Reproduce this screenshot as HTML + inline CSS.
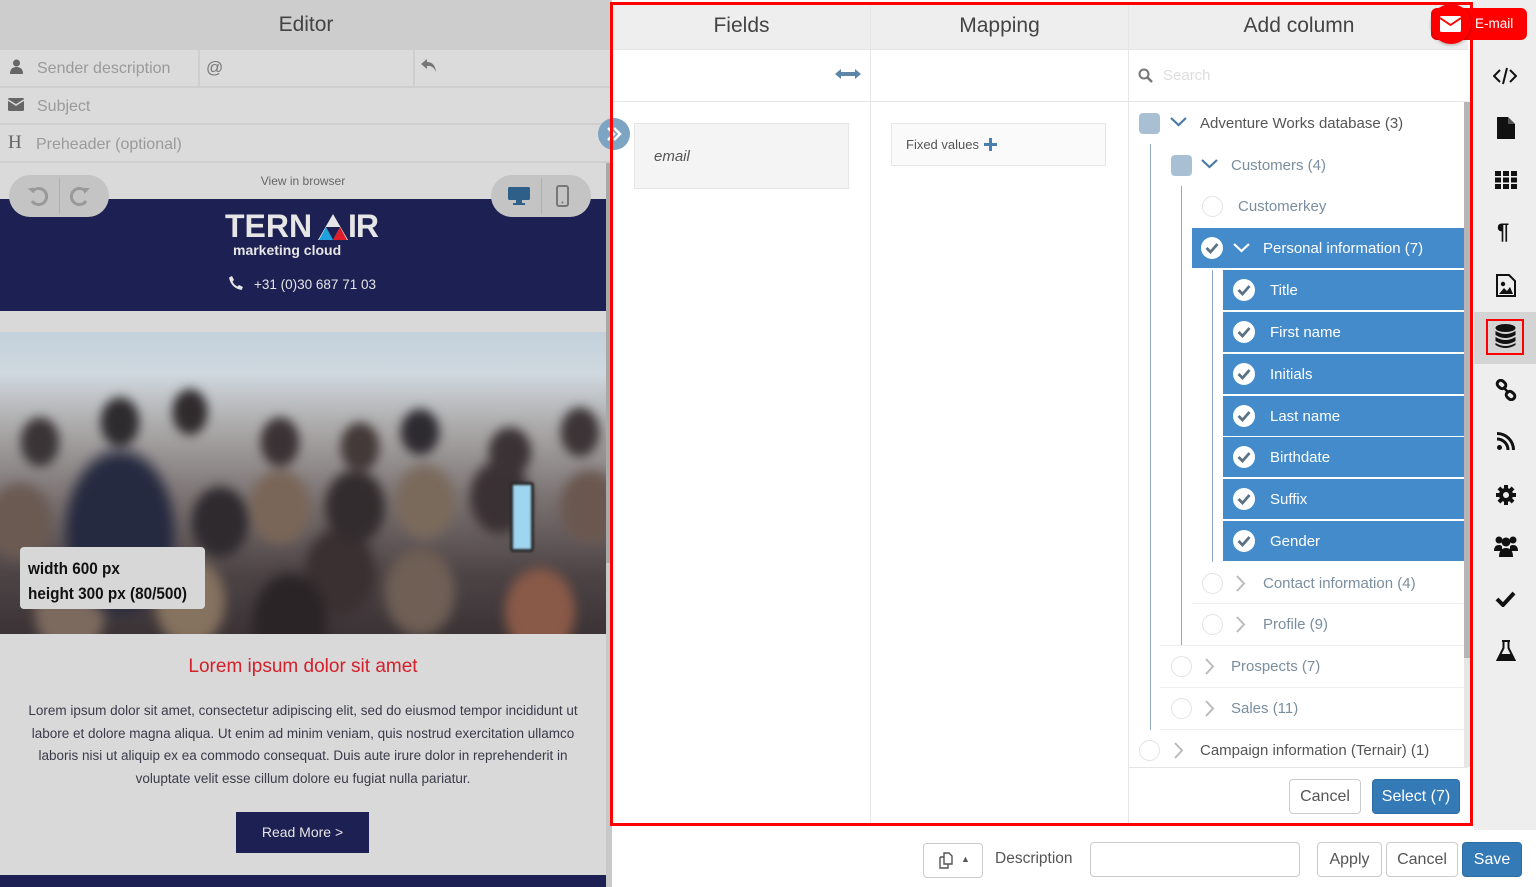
<!DOCTYPE html>
<html><head><meta charset="utf-8">
<style>
*{box-sizing:border-box;margin:0;padding:0}
body{width:1536px;height:887px;overflow:hidden;position:relative;background:#fff;font-family:"Liberation Sans",sans-serif}
.a{position:absolute}
.lbl{color:#9a9a9a;font-size:16px}
.sel{background:#438bcb;color:#fff}
.ck{position:absolute;width:22px;height:22px;border-radius:50%;background:#fff}
.ck svg{position:absolute;left:4px;top:5px}
.circ{position:absolute;width:21px;height:21px;border-radius:50%;border:1px solid #e3e3e3;background:#fff}
.sq{position:absolute;width:21px;height:21px;border-radius:4px;background:#a9bfd3}
.sep{position:absolute;height:1px;background:#eee}
.btn{position:absolute;border:1px solid #ccc;border-radius:4px;background:#fff;color:#555;font-size:16px;display:flex;align-items:center;justify-content:center}
.ico{position:absolute;left:1493px}
.t{position:absolute;font-size:15px}
</style></head><body>

<!-- LEFT EDITOR -->
<div class="a" style="left:0;top:0;width:612px;height:887px;background:#d9d9d9"></div>
<div class="a" style="left:0;top:0;width:612px;height:50px;background:#cdcdcd;font-size:21px;color:#444;text-align:center;line-height:50px">Editor</div>
<div class="a" style="left:0;top:50px;width:612px;height:38px;background:#dbdbdb;border-bottom:2px solid #cfcfcf"></div>
<div class="a" style="left:198px;top:50px;width:2px;height:38px;background:#cfcfcf"></div>
<div class="a" style="left:413px;top:50px;width:2px;height:38px;background:#cfcfcf"></div>
<svg class="a" style="left:10px;top:59px" width="13" height="15" viewBox="0 0 13 15"><circle cx="6.5" cy="4" r="3.5" fill="#666"/><path d="M0 15 Q0 8 6.5 8 Q13 8 13 15Z" fill="#666"/></svg>
<div class="a lbl" style="left:37px;top:60px">Sender description</div>
<div class="a" style="left:206px;top:58px;font-size:17px;color:#777">@</div>
<svg class="a" style="left:421px;top:59px" width="16" height="14" viewBox="0 0 16 14"><path d="M6 0 L0 5 L6 10 V7 Q12 6 15 13 Q14 3 6 3Z" fill="#777"/></svg>
<div class="a" style="left:0;top:88px;width:612px;height:37px;background:#dbdbdb;border-bottom:2px solid #cfcfcf"></div>
<svg class="a" style="left:8px;top:98px" width="16" height="13" viewBox="0 0 16 13"><rect width="16" height="13" rx="1.5" fill="#666"/><path d="M0 2 L8 7 L16 2" stroke="#dbdbdb" stroke-width="1.5" fill="none"/></svg>
<div class="a lbl" style="left:37px;top:98px">Subject</div>
<div class="a" style="left:0;top:125px;width:612px;height:38px;background:#dbdbdb;border-bottom:2px solid #cfcfcf"></div>
<div class="a" style="left:8px;top:132px;font-family:'Liberation Serif',serif;font-size:19px;color:#666">H</div>
<div class="a lbl" style="left:36px;top:136px">Preheader (optional)</div>
<div class="a" style="left:0;top:163px;width:606px;height:36px;background:#dadada;font-size:12px;color:#666;text-align:center;line-height:36px">View in browser</div>
<div class="a" style="left:0;top:199px;width:606px;height:112px;background:#1d2052"></div>
<div class="a" style="left:9px;top:175px;width:100px;height:42px;border-radius:21px;background:#c4c4c4"></div>
<div class="a" style="left:59px;top:178px;width:1px;height:36px;background:#b0b0b0"></div>
<svg class="a" style="left:27px;top:185px" width="22" height="22" viewBox="0 0 22 22"><path d="M5 7 A8 8 0 1 1 5 16" stroke="#999" stroke-width="3" fill="none"/><path d="M1 3 L7 3 L7 9Z" fill="#999" transform="rotate(-10 4 6)"/></svg>
<svg class="a" style="left:69px;top:185px" width="22" height="22" viewBox="0 0 22 22"><path d="M17 7 A8 8 0 1 0 17 16" stroke="#999" stroke-width="3" fill="none"/><path d="M21 3 L15 3 L15 9Z" fill="#999"/></svg>
<div class="a" style="left:491px;top:175px;width:100px;height:42px;border-radius:21px;background:#c4c4c4"></div>
<div class="a" style="left:541px;top:178px;width:1px;height:36px;background:#b0b0b0"></div>
<svg class="a" style="left:507px;top:186px" width="24" height="20" viewBox="0 0 24 20"><rect x="1" y="1" width="22" height="13" rx="1.5" fill="#2e5f88"/><rect x="9" y="14" width="6" height="3" fill="#2e5f88"/><rect x="6" y="17" width="12" height="2" fill="#2e5f88"/></svg>
<svg class="a" style="left:556px;top:185px" width="13" height="22" viewBox="0 0 13 22"><rect x="1" y="1" width="11" height="20" rx="2" fill="none" stroke="#777" stroke-width="2"/><circle cx="6.5" cy="17.5" r="1" fill="#777"/></svg>
<div class="a" style="left:225px;top:208px;font-size:32px;font-weight:bold;color:#e6e6e6">TERN</div>
<div class="a" style="left:348px;top:208px;font-size:32px;font-weight:bold;color:#e6e6e6;letter-spacing:-1px">IR</div>
<svg class="a" style="left:318px;top:214px" width="30" height="26" viewBox="0 0 30 26"><path d="M15 0 L30 26 H0Z" fill="#e6e6e6"/><path d="M8 13 L15 26 H1Z" fill="#1ea0dd"/><path d="M22 13 L29 26 H15Z" fill="#e01e2b"/><path d="M15 26 L8 13 H22Z" fill="#1d2052"/></svg>
<div class="a" style="left:233px;top:242px;font-size:14px;font-weight:bold;color:#e6e6e6">marketing cloud</div>
<svg class="a" style="left:229px;top:276px" width="14" height="14" viewBox="0 0 14 14"><path d="M3 0 L5 4 L3.5 5.5 Q5 9 8.5 10.5 L10 9 L14 11 L12.5 14 Q2 12 0 1.5Z" fill="#e6e6e6"/></svg>
<div class="a" style="left:254px;top:277px;font-size:13.5px;color:#e6e6e6">+31 (0)30 687 71 03</div>
<div class="a" style="left:0;top:311px;width:606px;height:21px;background:#d9d9d9"></div>
<!-- crowd image -->
<div class="a" style="left:0;top:332px;width:606px;height:302px;overflow:hidden;background:linear-gradient(180deg,#c3d1dc 0%,#cfd8de 14%,#aaa8a8 32%,#7b7272 55%,#4d4446 80%,#3b3336 100%)">
<div class="a" style="left:-20px;top:0;width:646px;height:330px;filter:blur(5px);background:
radial-gradient(ellipse 22px 28px at 60px 110px,#3a3436 75%,transparent 100%),
radial-gradient(ellipse 22px 28px at 140px 90px,#2e2b2e 75%,transparent 100%),
radial-gradient(ellipse 20px 26px at 210px 80px,#2f2a2c 75%,transparent 100%),
radial-gradient(ellipse 22px 28px at 300px 110px,#3a3234 75%,transparent 100%),
radial-gradient(ellipse 22px 28px at 380px 115px,#433938 75%,transparent 100%),
radial-gradient(ellipse 22px 26px at 440px 100px,#2e2b30 75%,transparent 100%),
radial-gradient(ellipse 24px 28px at 530px 120px,#3a3234 75%,transparent 100%),
radial-gradient(ellipse 22px 28px at 600px 100px,#3c3436 75%,transparent 100%),
radial-gradient(ellipse 60px 90px at 140px 200px,#262a40 80%,transparent 100%),
radial-gradient(ellipse 36px 44px at 40px 190px,#6a5a52 75%,transparent 100%),
radial-gradient(ellipse 32px 40px at 240px 190px,#2e2a2e 75%,transparent 100%),
radial-gradient(ellipse 34px 42px at 300px 175px,#7a6658 75%,transparent 100%),
radial-gradient(ellipse 34px 42px at 375px 175px,#332c2e 75%,transparent 100%),
radial-gradient(ellipse 34px 42px at 445px 170px,#7a6a5c 75%,transparent 100%),
radial-gradient(ellipse 34px 42px at 520px 165px,#3a3134 75%,transparent 100%),
radial-gradient(ellipse 34px 42px at 610px 175px,#6a5850 75%,transparent 100%),
radial-gradient(ellipse 40px 50px at 90px 280px,#7c6a5e 75%,transparent 100%),
radial-gradient(ellipse 40px 50px at 210px 270px,#85725f 75%,transparent 100%),
radial-gradient(ellipse 42px 55px at 310px 290px,#2a2426 75%,transparent 100%),
radial-gradient(ellipse 40px 50px at 360px 240px,#3a3032 75%,transparent 100%),
radial-gradient(ellipse 40px 50px at 440px 260px,#6f5f55 75%,transparent 100%),
radial-gradient(ellipse 40px 50px at 560px 280px,#8a5a48 75%,transparent 100%);"></div>
<div class="a" style="left:510px;top:150px;width:24px;height:70px;background:#9fd6ef;border:3px solid #2a2a2a;border-radius:3px;filter:blur(1px)"></div>
</div>
<div class="a" style="left:20px;top:547px;width:185px;height:62px;background:#d7d7d7;border-radius:4px"></div>
<div class="a" style="left:28px;top:556px;font-size:17px;font-weight:bold;color:#111;line-height:25px;transform:scaleX(.9);transform-origin:left">width 600 px<br>height 300 px (80/500)</div>
<div class="a" style="left:0;top:656px;width:606px;text-align:center;font-size:19px;color:#d3202a">Lorem ipsum dolor sit amet</div>
<div class="a" style="left:18px;top:700px;width:570px;text-align:center;font-size:13.5px;color:#3a3a4a;line-height:22.5px">Lorem ipsum dolor sit amet, consectetur adipiscing elit, sed do eiusmod tempor incididunt ut labore et dolore magna aliqua. Ut enim ad minim veniam, quis nostrud exercitation ullamco laboris nisi ut aliquip ex ea commodo consequat. Duis aute irure dolor in reprehenderit in voluptate velit esse cillum dolore eu fugiat nulla pariatur.</div>
<div class="a" style="left:236px;top:812px;width:133px;height:41px;background:#1d2052;color:#e6e6e6;font-size:14px;text-align:center;line-height:41px">Read More &gt;</div>
<div class="a" style="left:0;top:875px;width:606px;height:12px;background:#1d2052"></div>
<div class="a" style="left:606px;top:163px;width:6px;height:724px;background:#c8c8c8"></div>
<div class="a" style="left:606px;top:163px;width:6px;height:400px;background:#a9a9a9"></div>

<!-- MIDDLE PANEL -->
<div class="a" style="left:612px;top:0;width:860px;height:830px;background:#fff"></div>
<div class="a" style="left:612px;top:3px;width:856px;height:46px;background:#eee"></div>
<div class="a" style="left:613px;top:3px;width:257px;height:46px;font-size:21px;color:#444;text-align:center;line-height:46px">Fields</div>
<div class="a" style="left:871px;top:3px;width:257px;height:46px;font-size:21px;color:#444;text-align:center;line-height:46px">Mapping</div>
<div class="a" style="left:1129px;top:3px;width:340px;height:46px;font-size:21px;color:#444;text-align:center;line-height:46px">Add column</div>
<div class="a" style="left:870px;top:3px;width:1px;height:822px;background:#e6e6e6"></div>
<div class="a" style="left:1128px;top:3px;width:1px;height:822px;background:#e6e6e6"></div>
<div class="a" style="left:612px;top:49px;width:856px;height:1px;background:#e6e6e6"></div>
<div class="a" style="left:612px;top:101px;width:856px;height:1px;background:#e6e6e6"></div>
<svg class="a" style="left:835px;top:68px" width="26" height="12" viewBox="0 0 26 12"><path d="M0 6 L6 1 V4 H20 V1 L26 6 L20 11 V8 H6 V11Z" fill="#5d86a8"/></svg>
<div class="a" style="left:634px;top:123px;width:215px;height:66px;background:#f4f4f4;border:1px solid #e6e6e6"></div>
<div class="a" style="left:654px;top:148px;font-size:15px;font-style:italic;color:#555">email</div>
<div class="a" style="left:891px;top:123px;width:215px;height:43px;background:#fafafa;border:1px solid #e6e6e6"></div>
<div class="a" style="left:906px;top:137px;font-size:13px;color:#555">Fixed values</div>
<svg class="a" style="left:984px;top:138px" width="13" height="13" viewBox="0 0 13 13"><path d="M5 0H8V5H13V8H8V13H5V8H0V5H5Z" fill="#4a7fb0"/></svg>
<div class="a" style="left:598px;top:118px;width:32px;height:32px;border-radius:50%;background:#7ea4c3"></div>
<svg class="a" style="left:606px;top:126px" width="16" height="16" viewBox="0 0 16 16"><path d="M2 2 L8 8 L2 14 M8 2 L14 8 L8 14" stroke="#fff" stroke-width="2.5" fill="none"/></svg>

<svg class="a" style="left:1138px;top:68px" width="15" height="15" viewBox="0 0 15 15"><circle cx="6" cy="6" r="4.5" stroke="#777" stroke-width="2" fill="none"/><path d="M9.5 9.5 L14 14" stroke="#777" stroke-width="2.5"/></svg>
<div class="a" style="left:1163px;top:67px;font-size:15px;color:#ddd">Search</div>

<!-- tree -->
<div class="a" style="left:1150px;top:144px;width:1px;height:586px;background:#8eaac4"></div>
<div class="a" style="left:1181px;top:186px;width:1px;height:459px;background:#8eaac4"></div>
<div class="a" style="left:1212px;top:270px;width:1px;height:292px;background:#8eaac4"></div>

<div class="sq" style="left:1139px;top:113px"></div>
<svg class="a" style="left:1170px;top:117px" width="17" height="10" viewBox="0 0 17 10"><path d="M1 1 L8.5 8 L16 1" stroke="#4a7aa5" stroke-width="2.2" fill="none"/></svg>
<div class="t" style="left:1200px;top:115px;color:#555">Adventure Works database (3)</div>

<div class="sq" style="left:1171px;top:155px"></div>
<svg class="a" style="left:1201px;top:159px" width="17" height="10" viewBox="0 0 17 10"><path d="M1 1 L8.5 8 L16 1" stroke="#4a7aa5" stroke-width="2.2" fill="none"/></svg>
<div class="t" style="left:1231px;top:157px;color:#7a8e9f">Customers (4)</div>

<div class="circ" style="left:1202px;top:196px"></div>
<div class="t" style="left:1238px;top:198px;color:#7a8e9f">Customerkey</div>

<div class="a sel" style="left:1192px;top:228px;width:272px;height:40px"></div>
<div class="ck" style="left:1201px;top:237px"><svg width="14" height="12" viewBox="0 0 14 12"><path d="M1.5 6 L5.5 10 L12.5 2" stroke="#5b7285" stroke-width="2.8" fill="none"/></svg></div>
<svg class="a" style="left:1233px;top:243px" width="17" height="10" viewBox="0 0 17 10"><path d="M1 1 L8.5 8 L16 1" stroke="#fff" stroke-width="2.2" fill="none"/></svg>
<div class="t" style="left:1263px;top:240px;color:#fff">Personal information (7)</div>

<div class="a sel" style="left:1223px;top:270px;width:241px;height:40px"></div>
<div class="a sel" style="left:1223px;top:312px;width:241px;height:40px"></div>
<div class="a sel" style="left:1223px;top:354px;width:241px;height:40px"></div>
<div class="a sel" style="left:1223px;top:396px;width:241px;height:40px"></div>
<div class="a sel" style="left:1223px;top:437px;width:241px;height:40px"></div>
<div class="a sel" style="left:1223px;top:479px;width:241px;height:40px"></div>
<div class="a sel" style="left:1223px;top:521px;width:241px;height:40px"></div>

<div class="ck" style="left:1233px;top:279px"><svg width="14" height="12" viewBox="0 0 14 12"><path d="M1.5 6 L5.5 10 L12.5 2" stroke="#5b7285" stroke-width="2.8" fill="none"/></svg></div>
<div class="ck" style="left:1233px;top:321px"><svg width="14" height="12" viewBox="0 0 14 12"><path d="M1.5 6 L5.5 10 L12.5 2" stroke="#5b7285" stroke-width="2.8" fill="none"/></svg></div>
<div class="ck" style="left:1233px;top:363px"><svg width="14" height="12" viewBox="0 0 14 12"><path d="M1.5 6 L5.5 10 L12.5 2" stroke="#5b7285" stroke-width="2.8" fill="none"/></svg></div>
<div class="ck" style="left:1233px;top:405px"><svg width="14" height="12" viewBox="0 0 14 12"><path d="M1.5 6 L5.5 10 L12.5 2" stroke="#5b7285" stroke-width="2.8" fill="none"/></svg></div>
<div class="ck" style="left:1233px;top:446px"><svg width="14" height="12" viewBox="0 0 14 12"><path d="M1.5 6 L5.5 10 L12.5 2" stroke="#5b7285" stroke-width="2.8" fill="none"/></svg></div>
<div class="ck" style="left:1233px;top:488px"><svg width="14" height="12" viewBox="0 0 14 12"><path d="M1.5 6 L5.5 10 L12.5 2" stroke="#5b7285" stroke-width="2.8" fill="none"/></svg></div>
<div class="ck" style="left:1233px;top:530px"><svg width="14" height="12" viewBox="0 0 14 12"><path d="M1.5 6 L5.5 10 L12.5 2" stroke="#5b7285" stroke-width="2.8" fill="none"/></svg></div>
<div class="t" style="left:1270px;top:282px;color:#fff">Title</div>
<div class="t" style="left:1270px;top:324px;color:#fff">First name</div>
<div class="t" style="left:1270px;top:366px;color:#fff">Initials</div>
<div class="t" style="left:1270px;top:408px;color:#fff">Last name</div>
<div class="t" style="left:1270px;top:449px;color:#fff">Birthdate</div>
<div class="t" style="left:1270px;top:491px;color:#fff">Suffix</div>
<div class="t" style="left:1270px;top:533px;color:#fff">Gender</div>

<div class="circ" style="left:1202px;top:573px"></div>
<svg class="a" style="left:1236px;top:575px" width="10" height="17" viewBox="0 0 10 17"><path d="M1 1 L8 8.5 L1 16" stroke="#bbb" stroke-width="2" fill="none"/></svg>
<div class="t" style="left:1263px;top:575px;color:#7a8e9f">Contact information (4)</div>
<div class="sep" style="left:1192px;top:603px;width:272px"></div>
<div class="circ" style="left:1202px;top:614px"></div>
<svg class="a" style="left:1236px;top:616px" width="10" height="17" viewBox="0 0 10 17"><path d="M1 1 L8 8.5 L1 16" stroke="#bbb" stroke-width="2" fill="none"/></svg>
<div class="t" style="left:1263px;top:616px;color:#7a8e9f">Profile (9)</div>
<div class="sep" style="left:1160px;top:645px;width:304px"></div>
<div class="circ" style="left:1171px;top:656px"></div>
<svg class="a" style="left:1205px;top:658px" width="10" height="17" viewBox="0 0 10 17"><path d="M1 1 L8 8.5 L1 16" stroke="#bbb" stroke-width="2" fill="none"/></svg>
<div class="t" style="left:1231px;top:658px;color:#7a8e9f">Prospects (7)</div>
<div class="sep" style="left:1160px;top:687px;width:304px"></div>
<div class="circ" style="left:1171px;top:698px"></div>
<svg class="a" style="left:1205px;top:700px" width="10" height="17" viewBox="0 0 10 17"><path d="M1 1 L8 8.5 L1 16" stroke="#bbb" stroke-width="2" fill="none"/></svg>
<div class="t" style="left:1231px;top:700px;color:#7a8e9f">Sales (11)</div>
<div class="sep" style="left:1160px;top:729px;width:304px"></div>
<div class="circ" style="left:1139px;top:740px"></div>
<svg class="a" style="left:1174px;top:742px" width="10" height="17" viewBox="0 0 10 17"><path d="M1 1 L8 8.5 L1 16" stroke="#bbb" stroke-width="2" fill="none"/></svg>
<div class="t" style="left:1200px;top:742px;color:#555">Campaign information (Ternair) (1)</div>
<div class="a" style="left:1129px;top:767px;width:339px;height:1px;background:#e6e6e6"></div>
<div class="a" style="left:1464px;top:102px;width:6px;height:665px;background:#e6e6e6"></div>
<div class="a" style="left:1464px;top:102px;width:6px;height:556px;background:#b5b5b5"></div>
<div class="btn" style="left:1289px;top:779px;width:72px;height:35px">Cancel</div>
<div class="btn" style="left:1372px;top:779px;width:88px;height:35px;background:#337ab7;border-color:#2e6da4;color:#fff">Select (7)</div>

<!-- red frame -->
<div class="a" style="left:610px;top:2px;width:863px;height:824px;border:3px solid #f00"></div>

<!-- right sidebar -->
<div class="a" style="left:1474px;top:0;width:62px;height:830px;background:#eee"></div>
<div class="a" style="left:1474px;top:312px;width:62px;height:52px;background:#d4d4d4"></div>
<div class="a" style="left:1486px;top:319px;width:38px;height:36px;border:2px solid #f00"></div>
<div class="a" style="left:1431px;top:8px;width:96px;height:32px;border-radius:6px;background:#f00"></div>
<div class="a" style="left:1431px;top:4px;width:40px;height:40px;border-radius:50%;background:#f00;box-shadow:0 1px 3px rgba(0,0,0,.3)"></div>
<svg class="a" style="left:1440px;top:16px" width="21" height="16" viewBox="0 0 21 16"><rect width="21" height="16" rx="1.5" fill="#fff"/><path d="M0 2 L10.5 9 L21 2" stroke="#f00" stroke-width="1.8" fill="none"/></svg>
<div class="a" style="left:1475px;top:16px;font-size:13.5px;color:#fff">E-mail</div>
<svg class="ico" style="top:67px" width="24" height="18" viewBox="0 0 24 18"><path d="M7 3 L1 9 L7 15 M17 3 L23 9 L17 15 M14 1 L10 17" stroke="#111" stroke-width="2" fill="none"/></svg>
<svg class="ico" style="top:117px;left:1497px" width="18" height="22" viewBox="0 0 18 22"><path d="M0 0 H11 L18 7 V22 H0Z" fill="#111"/><path d="M11 0 L18 7 H11Z" fill="#555"/></svg>
<svg class="ico" style="top:171px;left:1495px" width="22" height="18" viewBox="0 0 22 18"><g fill="#111"><rect x="0" y="0" width="6" height="5"/><rect x="8" y="0" width="6" height="5"/><rect x="16" y="0" width="6" height="5"/><rect x="0" y="6.5" width="6" height="5"/><rect x="8" y="6.5" width="6" height="5"/><rect x="16" y="6.5" width="6" height="5"/><rect x="0" y="13" width="6" height="5"/><rect x="8" y="13" width="6" height="5"/><rect x="16" y="13" width="6" height="5"/></g></svg>
<div class="a" style="left:1497px;top:219px;font-size:22px;font-weight:bold;color:#111">¶</div>
<svg class="ico" style="top:274px;left:1496px" width="20" height="23" viewBox="0 0 20 23"><path d="M1 1 H13 L19 7 V22 H1Z" fill="none" stroke="#111" stroke-width="2"/><circle cx="7" cy="10" r="2.2" fill="#111"/><path d="M3 20 L8 14 L11 17 L14 13 L17 20Z" fill="#111"/></svg>
<svg class="ico" style="top:324px;left:1495px" width="21" height="25" viewBox="0 0 21 25"><g fill="#111"><ellipse cx="10.5" cy="4" rx="10" ry="4"/><path d="M0.5 7 Q10.5 13 20.5 7 V11 Q10.5 17 0.5 11Z"/><path d="M0.5 13 Q10.5 19 20.5 13 V17 Q10.5 23 0.5 17Z"/><path d="M0.5 19 Q10.5 25 20.5 19 V21 Q10.5 27 0.5 21Z"/></g></svg>
<svg class="ico" style="top:379px;left:1495px" width="22" height="22" viewBox="0 0 22 22"><g fill="none" stroke="#111" stroke-width="3"><rect x="2" y="2" width="9" height="7" rx="3.5" transform="rotate(40 6.5 5.5)"/><rect x="11" y="13" width="9" height="7" rx="3.5" transform="rotate(40 15.5 16.5)"/></g><path d="M8 8 L14 14" stroke="#111" stroke-width="2.5"/></svg>
<svg class="ico" style="top:432px;left:1497px" width="18" height="18" viewBox="0 0 18 18"><circle cx="2.5" cy="15.5" r="2.5" fill="#111"/><path d="M0 7 A11 11 0 0 1 11 18" stroke="#111" stroke-width="3" fill="none"/><path d="M0 1.5 A16.5 16.5 0 0 1 16.5 18" stroke="#111" stroke-width="3" fill="none"/></svg>
<svg class="ico" style="top:485px;left:1496px" width="20" height="20" viewBox="0 0 20 20"><g fill="#111"><circle cx="10" cy="10" r="7"/><rect x="8" y="0" width="4" height="20"/><rect x="0" y="8" width="20" height="4"/><rect x="8" y="0" width="4" height="20" transform="rotate(45 10 10)"/><rect x="8" y="0" width="4" height="20" transform="rotate(-45 10 10)"/></g><circle cx="10" cy="10" r="3" fill="#eee"/></svg>
<svg class="ico" style="top:535px;left:1494px" width="24" height="22" viewBox="0 0 24 22"><g fill="#111"><circle cx="5" cy="5" r="3.5"/><circle cx="19" cy="5" r="3.5"/><circle cx="12" cy="7" r="4.5"/><path d="M0 16 Q0 10 5 10 Q8 10 8 12 V16Z"/><path d="M24 16 Q24 10 19 10 Q16 10 16 12 V16Z"/><path d="M5 22 Q5 13 12 13 Q19 13 19 22Z"/></g></svg>
<svg class="ico" style="top:591px;left:1495px" width="21" height="16" viewBox="0 0 21 16"><path d="M2 8 L8 14 L19 2" stroke="#111" stroke-width="4" fill="none"/></svg>
<svg class="ico" style="top:640px;left:1496px" width="20" height="22" viewBox="0 0 20 22"><path d="M6 1 H14 M7.5 1 V8 L1.5 20 H18.5 L12.5 8 V1" stroke="#111" stroke-width="2" fill="none"/><path d="M4.5 14 H15.5 L18.5 20 H1.5Z" fill="#111"/></svg>

<!-- footer -->
<div class="a" style="left:612px;top:830px;width:924px;height:57px;background:#fff"></div>
<div class="btn" style="left:923px;top:843px;width:60px;height:35px"></div>
<svg class="a" style="left:939px;top:852px" width="16" height="17" viewBox="0 0 16 17"><path d="M5 1 H10 L13 4 V12 H5Z M1 5 H5 M1 5 V16 H9 V12" stroke="#555" stroke-width="1.4" fill="none"/></svg>
<div class="a" style="left:961px;top:854px;font-size:9px;color:#555">▲</div>
<div class="a" style="left:995px;top:850px;font-size:15.5px;color:#555">Description</div>
<div class="a" style="left:1090px;top:842px;width:210px;height:35px;border:1px solid #ccc;border-radius:4px"></div>
<div class="btn" style="left:1317px;top:842px;width:65px;height:35px">Apply</div>
<div class="btn" style="left:1386px;top:842px;width:72px;height:35px">Cancel</div>
<div class="btn" style="left:1462px;top:842px;width:60px;height:35px;background:#337ab7;border-color:#2e6da4;color:#fff">Save</div>
</body></html>
